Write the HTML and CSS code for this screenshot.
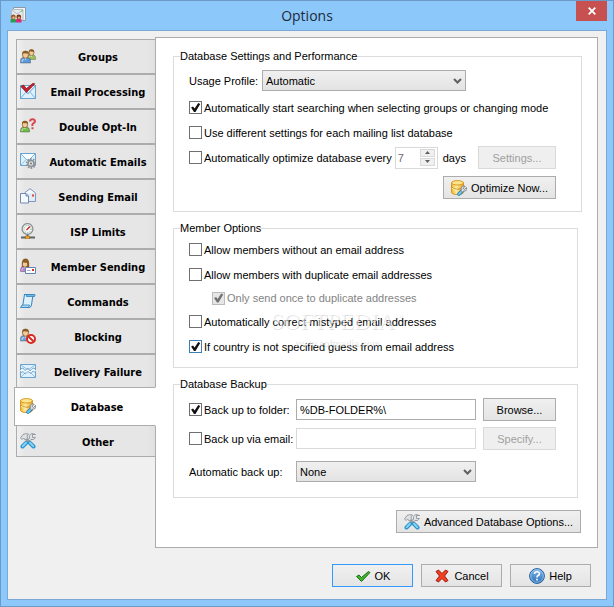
FILE: index.html
```html
<!doctype html>
<html lang="en">
  <head>
    <meta charset="utf-8">
    <title>Options</title>
    <link rel="stylesheet" href="styles.css">
  </head>
  <body>

    <svg class="defs" width="0" height="0" aria-hidden="true">
      <linearGradient id="gold" x1="0" x2="1" y1="0" y2="0">
        <stop offset="0" stop-color="#f2b632"/>
        <stop offset="0.4" stop-color="#ffeb9c"/>
        <stop offset="1" stop-color="#eaa31c"/>
      </linearGradient>
      <linearGradient id="blue" x1="0" x2="0" y1="0" y2="1">
        <stop offset="0" stop-color="#7fb8ea"/>
        <stop offset="1" stop-color="#2b6fb8"/>
      </linearGradient>
      <symbol id="person" viewBox="0 0 10 12">
        <path d="M.5 11.5V9.5Q.5 7 3 6.6H7Q9.500 7 9.500 9.500V11.500Z" fill="currentColor" stroke="#0004"/>
        <path d="M2 10.500V9.500Q2 8.300 3.500 8" fill="none" stroke="#fff9"/>
        <path d="M4 6.500H6L5 9Z" fill="#fff"/>
        <ellipse cx="5" cy="4" rx="2.700" ry="3.200" fill="#f3cb9b" stroke="#7a5220" stroke-width=".7"/>
        <path d="M2 4Q1.500 .3 5 .3T8 4L7 2.800Q4.500 3 3.500 2.300Z" fill="#8b5c22"/>
      </symbol>
      <symbol id="database" viewBox="0 0 16 16">
        <path d="M.5 2.500V12Q.5 14.500 6.500 14.500T12.500 12V2.500Z" fill="url(#gold)" stroke="#d59a26"/>
        <ellipse cx="6.500" cy="2.800" rx="6" ry="2.200" fill="#ffe58a" stroke="#d59a26"/>
        <path d="M.5 7Q2 9.300 6.500 9.300T12.500 7" fill="none" stroke="#c98d1e"/>
        <path d="M1 8.200Q3 10.300 6.500 10.300" fill="none" stroke="#fff3b8"/>
        <path d="M10.500 11.500L8 14" stroke="#1f7fc0" stroke-width="3.600" stroke-linecap="round"/>
        <path d="M10.500 11.500L8 14" stroke="#6cc8f0" stroke-width="2" stroke-linecap="round"/>
        <path d="M15.500 7.500L13.500 9.500L12.300 8.300L14.200 6.200Q11.500 5.300 10.300 7.300Q9.800 8.500 10.300 9.500L9.800 10.500L11.500 12L12.500 11.300Q15 11.500 15.700 9.500Z" fill="#d5dbe0" stroke="#6c757d" stroke-width=".8"/>
      </symbol>
      <symbol id="tools" viewBox="0 0 16 16">
        <path d="M5 5L11 11M11 5L5 11" stroke="#989da2" stroke-width="2.600"/>
        <path d="M10 10L13.500 13.500" stroke="#2b8fc9" stroke-width="4" stroke-linecap="round"/>
        <path d="M10 9.800L13.300 13.300" stroke="#7fd4f6" stroke-width="2" stroke-linecap="round"/>
        <path d="M6 10L2.500 13.500" stroke="#2b8fc9" stroke-width="4" stroke-linecap="round"/>
        <path d="M6 9.800L2.700 13.300" stroke="#7fd4f6" stroke-width="2" stroke-linecap="round"/>
        <path d="M.5 5L3 1.500Q5.500 0 8.500 1L7 3L7.500 5L5.500 7L3.500 5L2 6.500Z" fill="#dfe2e4" stroke="#858b90" stroke-width=".8"/>
        <path d="M15.500 1.500H12.500V4.500H15.500Q14 7.500 11 6.500L9.500 8L8.200 6.500L9.500 5Q8.700 1.500 12 .5Z" fill="#dfe2e4" stroke="#858b90" stroke-width=".8"/>
      </symbol>
      <symbol id="envelope" viewBox="0 0 16 13" preserveAspectRatio="none">
        <path d="M.5.5H15.500V12.500H.5Z" fill="#dff1fc" stroke="#6ba3cf"/>
        <path d="M1 12L6 6.500M15 12L10 6.500" fill="none" stroke="#8fc0e2"/>
        <path d="M1 1L8 8L15 1" fill="#f7fcff" stroke="#7db4dc"/>
      </symbol>
      <symbol id="chevron" viewBox="0 0 9 6">
        <path d="M1 1L4.500 4.500L8 1" fill="none" stroke="#606060" stroke-width="2"/>
      </symbol>
    </svg>

    <div class="window">
      <header class="titlebar">
        <svg class="app-icon" viewBox="0 0 16 16">
          <path d="M3.500.5H15.500V13.500H3.500Z" fill="#f2f5f7" stroke="#8d99a5"/>
          <path d="M1.500 2.500H13V13H1.500Z" fill="#e4eaee" stroke="#b2bec8"/>
          <path d="M2 3L7 7L13 3" fill="none" stroke="#b2bec8"/>
          <path d="M11 3H13V5H11Z" fill="#93cf85"/>
          <path d="M.5 15.500V12.500Q3 10.500 6 12.500V15.500Z" fill="#2f9c56"/>
          <circle cx="3.300" cy="10" r="2.400" fill="#9c5a25"/>
          <path d="M6 15.500V12.500Q9 10.500 11.500 12.500V15.500Z" fill="#d92a79"/>
          <circle cx="8.800" cy="10" r="2.400" fill="#7d3514"/>
          <circle cx="3.500" cy="10.700" r="1.200" fill="#f0b880"/>
          <circle cx="8.900" cy="10.700" r="1.200" fill="#e8a674"/>
        </svg>
        <h1 class="title">Options</h1>
        <button class="close" aria-label="Close">
          <svg viewBox="0 0 8 8"><path d="M.7.7L7.300 7.300M7.300.7L.7 7.300" stroke="#fff" stroke-width="1.800"/></svg>
        </button>
      </header>

      <div class="client">
        <div class="pages">
          <nav class="tabs">
            <button class="tab">
              <svg viewBox="0 0 16 16"><use href="#person" x="7" y="0" width="9" height="13" color="#9cc05c"/><use href="#person" x="0" y="2" width="11" height="14" color="#5b9be0"/></svg>
              <span>Groups</span>
            </button>
            <button class="tab">
              <svg viewBox="0 0 16 16"><use href="#envelope" x="0" y="2" width="16" height="14"/><path d="M1 3.500L3.500 2L6.500 5.500L13 .3L14.800 .8L6.500 9.500Z" fill="#c8202c" stroke="#7d1018" stroke-width=".7"/></svg>
              <span>Email Processing</span>
            </button>
            <button class="tab">
              <svg viewBox="0 0 16 16"><use href="#person" x="0" y="2" width="10" height="13" color="#72bd4c"/><path d="M10 3.500Q10.200 1.200 12.500 1.200T15 3.200Q15 4.500 13.500 5.200T12.500 8M12.500 9.300V11.300" fill="none" stroke="#d9474c" stroke-width="2"/></svg>
              <span>Double Opt-In</span>
            </button>
            <button class="tab">
              <svg viewBox="0 0 16 16"><use href="#envelope" x="0" y="0" width="16" height="13"/><circle cx="11" cy="10.500" r="4.500" fill="none" stroke="#8d9296" stroke-width="1.800" stroke-dasharray="1.600 1.230"/><circle cx="11" cy="10.500" r="3" fill="#dfe2e4" stroke="#8d9296" stroke-width="1.600"/><circle cx="11" cy="10.500" r="1" fill="#70757a"/></svg>
              <span>Automatic Emails</span>
            </button>
            <button class="tab">
              <svg viewBox="0 0 16 16"><path d="M4.500 5L10 .7L15.500 5V13.500H4.500Z" fill="#e2ecf7" stroke="#8095b8"/><path d="M5.500 5L10 1.800L14.500 5Z" fill="#f6f9fd"/><path d="M12 6.500H14V8.500H12Z" fill="#e5412a"/><path d="M.5 5.500H6L8.500 8V15H.5Z" fill="#f6f9fd" stroke="#7288b0"/><path d="M6 5.500V8H8.500" fill="#b9c9e4" stroke="#7288b0"/></svg>
              <span>Sending Email</span>
            </button>
            <button class="tab">
              <svg viewBox="0 0 16 16"><circle cx="7.500" cy="6" r="5.400" fill="#f8fafb" stroke="#8b9196" stroke-width="1.300"/><circle cx="7.500" cy="6" r="3.600" fill="none" stroke="#519b60" stroke-dasharray="1 1.400"/><path d="M6.500 7L10 3.500" stroke="#d12626" stroke-width="1.400"/><path d="M7.500 11.500V14M1 14.500H15" stroke="#5f6468" stroke-width="1.800"/><path d="M5.500 13H9.500V16H5.500Z" fill="#f0a52d" stroke="#98651d" stroke-width=".6"/></svg>
              <span>ISP Limits</span>
            </button>
            <button class="tab">
              <svg viewBox="0 0 16 16"><path d="M1.800 9Q1 .5 5.500.5T9.200 9Z" fill="#8b5c22"/><use href="#person" x="0" y="1" width="10" height="14" color="#bd7cd2"/><path d="M5.500 9.500H15.500V15.500H5.500Z" fill="#fff" stroke="#5e86b6"/><path d="M12 11H14V13H12Z" fill="#e62b20"/><path d="M7 12.500H10.500" stroke="#9aaec8"/></svg>
              <span>Member Sending</span>
            </button>
            <button class="tab">
              <svg viewBox="0 0 16 16"><path d="M4.500 1.500H14.500Q12.500 2 12.500 5L11.500 12Q11 14.500 9 14.500H.7Q2.500 13.500 3 11Z" fill="#dcf1fc" stroke="#3583bb"/><path d="M4.500 1.500Q7 .8 6.500 3.500H14.500Q15.800 1.500 14.500 1.500Z" fill="#6fb9e4" stroke="#3583bb" stroke-width=".8"/><path d="M.7 14.500Q1 12 3 12H9.500Q8.200 14.500 9.500 14.500Z" fill="#a7d6f1" stroke="#3583bb" stroke-width=".8"/></svg>
              <span>Commands</span>
            </button>
            <button class="tab">
              <svg viewBox="0 0 16 16"><use href="#person" x="0" y="0" width="11" height="14" color="#6ba3dc"/><circle cx="11" cy="11" r="4" fill="#fff" stroke="#d92b22" stroke-width="2"/><path d="M8.200 8.200L13.800 13.800" stroke="#d92b22" stroke-width="2"/></svg>
              <span>Blocking</span>
            </button>
            <button class="tab">
              <svg viewBox="0 0 16 16"><path d="M.5 1.500H15.500V14.500H.5Z" fill="#dff1fc" stroke="#6ba3cf"/><path d="M1 2L8 7L15 2M1 14L6 9M15 14L10 9" fill="none" stroke="#8fc0e2"/><path d="M0 8L3 7L5 9.300L8 6.800L10.500 9.300L13 6.500L16 8" fill="none" stroke="#fff"/><path d="M0 6L3 5L5 7.500L8 5L10 8L13 5L16 6M0 10L3 8.500L5 11L8 8.500L11 10.500L13 8L16 10" fill="none" stroke="#6b9cc4" stroke-width=".8"/></svg>
              <span>Delivery Failure</span>
            </button>
            <button class="tab tab-selected">
              <svg><use href="#database"/></svg>
              <span>Database</span>
            </button>
            <button class="tab tab-last">
              <svg><use href="#tools"/></svg>
              <span>Other</span>
            </button>
          </nav>

          <main class="panel">
            <fieldset class="group group-settings">
              <legend>Database Settings and Performance</legend>
              <div class="profile-row">
                <label for="profile">Usage Profile:</label>
                <div class="combo">
                  <select id="profile"><option>Automatic</option></select>
                  <svg><use href="#chevron"/></svg>
                </div>
              </div>
              <label class="check"><input type="checkbox" checked>Automatically start searching when selecting groups or changing mode</label>
              <label class="check"><input type="checkbox">Use different settings for each mailing list database</label>
              <div class="optimize-row">
                <label class="check"><input type="checkbox">Automatically optimize database every</label>
                <div class="spinner">
                  <input id="days" type="number" value="7" disabled>
                  <div class="spinner-buttons">
                    <button disabled aria-label="More"><svg viewBox="0 0 5 3"><path d="M0 3L2.500 0L5 3Z"/></svg></button>
                    <button disabled aria-label="Less"><svg viewBox="0 0 5 3"><path d="M0 0L2.500 3L5 0Z"/></svg></button>
                  </div>
                </div>
                <label class="days" for="days">days</label>
                <button class="button button-settings" disabled>Settings...</button>
              </div>
              <div class="actions">
                <button class="button button-optimize"><svg><use href="#database"/></svg>Optimize Now...</button>
              </div>
            </fieldset>

            <fieldset class="group group-members">
              <legend>Member Options</legend>
              <label class="check"><input type="checkbox">Allow members without an email address</label>
              <label class="check"><input type="checkbox">Allow members with duplicate email addresses</label>
              <label class="check check-sub"><input type="checkbox" checked disabled>Only send once to duplicate addresses</label>
              <label class="check"><input type="checkbox">Automatically correct mistyped email addresses</label>
              <label class="check"><input class="focused" type="checkbox" checked>If country is not specified guess from email address</label>
              <div class="watermark">
                <div class="watermark-name">SOFTPEDIA<sup>™</sup></div>
                <div class="watermark-url">www.softpedia.com</div>
              </div>
            </fieldset>

            <fieldset class="group group-backup">
              <legend>Database Backup</legend>
              <div class="backup-grid">
                <label class="check"><input type="checkbox" checked>Back up to folder:</label>
                <input class="text" type="text" value="%DB-FOLDER%\" aria-label="Back up folder">
                <button class="button">Browse...</button>
                <label class="check"><input type="checkbox">Back up via email:</label>
                <input class="text" type="text" disabled aria-label="Back up email">
                <button class="button" disabled>Specify...</button>
              </div>
              <div class="backup-grid backup-auto">
                <label for="auto">Automatic back up:</label>
                <div class="combo">
                  <select id="auto"><option>None</option></select>
                  <svg><use href="#chevron"/></svg>
                </div>
              </div>
            </fieldset>

            <div class="actions">
              <button class="button button-advanced"><svg><use href="#tools"/></svg>Advanced Database Options...</button>
            </div>
          </main>
        </div>

        <footer class="footer">
          <button class="button button-default">
            <svg viewBox="0 0 16 16"><path d="M1.500 8.500L4 7L6.500 9.500L13.500 3.500L15 4.500L6.500 13.500Z" fill="#3fb52c" stroke="#1d6e16"/></svg>OK
          </button>
          <button class="button">
            <svg viewBox="0 0 16 16"><path d="M2 3.500L4.500 2L8 5.500L11.500 2L14 3.500L10.500 8L14 12.500L11.500 14L8 10.500L4.500 14L2 12.500L5.500 8Z" fill="#f23f20" stroke="#9d1c10"/></svg>Cancel
          </button>
          <button class="button">
            <svg viewBox="0 0 16 16"><circle cx="8" cy="8" r="7.400" fill="url(#blue)" stroke="#235f9f"/><circle cx="8" cy="8" r="6.300" fill="none" stroke="#a9d0f2" stroke-width=".7"/><path d="M5.500 6Q5.700 3.800 8 3.800T10.500 5.800Q10.500 7 9.200 7.600T8 9.500M8 10.700V12.500" fill="none" stroke="#fff" stroke-width="1.600"/></svg>Help
          </button>
        </footer>
      </div>
    </div>

  </body>
</html>
```

FILE: styles.css
```css
* {
  box-sizing: border-box;
}

body {
  margin: 0;
  font: 11px/14px Tahoma, "Liberation Sans", sans-serif;
  color: #000;
}

button, input, select {
  font: inherit;
  color: inherit;
  margin: 0;
}

svg {
  display: block;
  flex: none;
  width: 16px;
  height: 16px;
}

.defs {
  position: absolute;
  width: 0;
  height: 0;
}

.window {
  display: flex;
  flex-direction: column;
  min-height: 100vh;
  padding: 0 6px 6px;
  background: #8dc8fa;
  border: 1px solid #6b9ac8;
}

.titlebar {
  display: grid;
  grid-template-columns: 31px 1fr 31px;
  height: 29px;
}

.app-icon {
  margin: 6px 0 0 3px;
}

.title {
  margin: 0;
  font: 14px/29px "Open Sans", sans-serif;
  text-align: center;
  color: #1c2a38;
}

.close {
  display: flex;
  align-items: center;
  justify-content: center;
  height: 20px;
  padding: 0;
  border: 0;
  background: #c75050;
}

.close svg {
  width: 8px;
  height: 8px;
}

.client {
  flex: 1;
  padding: 6px 8px 11px 6px;
  background: #f0f0f0;
  border: 1px solid #7aa9d8;
}

.pages {
  display: flex;
}

/* tabs */

.tabs {
  flex: none;
  width: 142px;
  margin-right: -1px;
  padding-top: 2px;
}

.tab {
  display: flex;
  width: 140px;
  height: 35px;
  margin-left: 2px;
  padding: 8px 0 0 3px;
  font-family: "DejaVu Sans Condensed", "DejaVu Sans", sans-serif;
  font-weight: bold;
  background: linear-gradient(90deg, #f0f0f0, #e6e6e6 8px, #e6e6e6 130px, #e0e0e0);
  border: 1px solid #acacac;
}

.tab span {
  flex: 1;
  padding-left: 5px;
  line-height: 19px;
  text-align: center;
}

.tab-selected {
  position: relative;
  width: 142px;
  height: 39px;
  margin: -2px 0;
  padding: 10px 2px 0 5px;
  background: #fff;
  border-right-color: #fff;
}

.tab-last {
  height: 33px;
}

/* database page */

.panel {
  flex: 1;
  min-width: 0;
  min-height: 511px;
  padding: 11px 16px 14px 17px;
  background: #fff;
  border: 1px solid #acacac;
}

.group {
  min-width: 0;
  margin: 0 3px 9px 0;
  padding: 0 21px 0 15px;
  border: 1px solid #dcdcdc;
}

.group legend {
  margin-left: -9px;
  padding: 0;
}

.group-settings {
  margin-right: -1px;
  padding: 7px 25px 12px 15px;
}

.group-members {
  position: relative;
  padding-top: 2px;
  padding-bottom: 8px;
}

.group-backup {
  padding-top: 7px;
  padding-bottom: 15px;
  margin-bottom: 12px;
}

.check {
  display: flex;
  align-items: center;
  height: 25px;
  white-space: nowrap;
}

.check-sub {
  height: 22px;
  margin-left: 23px;
  color: #838383;
}

.check input {
  appearance: none;
  flex: none;
  width: 13px;
  height: 13px;
  margin-right: 2px;
  background: #fff;
  border: 1px solid #707070;
}

.check input:checked::before {
  content: "";
  display: block;
  width: 11px;
  height: 11px;
  background: #111;
  clip-path: polygon(10% 50%, 28% 40%, 42% 60%, 75% 8%, 93% 18%, 50% 90%, 36% 90%);
}

.check input:disabled {
  background: #e6e6e6;
  border-color: #bcbcbc;
}

.check input:disabled::before {
  background: #707070;
}

.check .focused {
  border-color: #3c7fb1;
}

.profile-row {
  display: grid;
  grid-template-columns: 73px minmax(0, 204px);
  align-items: center;
  margin-bottom: 4px;
}

.combo {
  display: grid;
  align-items: center;
}

.combo select,
.combo svg {
  grid-area: 1 / 1;
}

.combo select {
  appearance: none;
  width: 100%;
  height: 21px;
  padding: 0 20px 0 3px;
  background: linear-gradient(#f0f0f0, #e3e3e3);
  border: 1px solid #acacac;
  border-radius: 0;
}

.combo svg {
  justify-self: end;
  width: 9px;
  height: 6px;
  margin-right: 4px;
  pointer-events: none;
}

.optimize-row {
  display: flex;
  align-items: center;
  height: 25px;
}

.optimize-row .check {
  min-width: 201px;
}

.spinner {
  display: flex;
  width: 43px;
  height: 22px;
  margin-left: 3px;
  border: 1px solid #d9d9d9;
}

.spinner input {
  appearance: textfield;
  flex: 1;
  min-width: 0;
  padding: 0 0 0 2px;
  color: #6d6d6d;
  background: #fff;
  border: 0;
}

.spinner-buttons {
  display: grid;
  gap: 1px;
  width: 17px;
  padding: 1px 2px 2px 0;
}

.spinner-buttons button {
  display: flex;
  align-items: center;
  justify-content: center;
  padding: 0;
  background: #f0f0f0;
  border: 1px solid #d9d9d9;
}

.spinner-buttons svg {
  width: 5px;
  height: 3px;
  fill: #606060;
}

.days {
  margin-left: 5px;
}

.button {
  display: flex;
  align-items: center;
  justify-content: center;
  gap: 4px;
  height: 23px;
  padding: 0;
  white-space: nowrap;
  background: linear-gradient(#f0f0f0, #e4e4e4);
  border: 1px solid #acacac;
}

.button:disabled {
  color: #a0a0a0;
  background: #efefef;
  border-color: #d9d9d9;
}

.actions {
  display: flex;
  justify-content: flex-end;
}

.group-settings .actions {
  margin-top: 6px;
}

.button-settings {
  width: 78px;
  margin-left: auto;
}

.button-optimize {
  width: 113px;
}

.button-advanced {
  width: 185px;
}

.backup-grid {
  display: grid;
  grid-template-columns: 107px minmax(0, 1fr) 73px;
  gap: 6px 0;
  align-items: center;
}

.backup-grid .check {
  height: 23px;
}

.backup-auto {
  margin-top: 11px;
}

.text {
  width: 100%;
  height: 21px;
  padding: 0 3px;
  background: #fff;
  border: 1px solid #acacac;
}

.text:disabled {
  border-color: #d9d9d9;
}

.backup-grid .text,
.backup-grid .combo {
  width: calc(100% - 7px);
}

/* faint stamp over the member options */

.watermark {
  position: absolute;
  top: 73px;
  left: 97px;
  font-family: "Liberation Serif", serif;
  text-align: center;
  color: #fff9;
  text-shadow: 1px 1px 0 #00000020;
  pointer-events: none;
}

.watermark-name {
  font-size: 23px;
  line-height: 28px;
}

.watermark-name sup {
  font-size: 8px;
  line-height: 8px;
  vertical-align: 10px;
}

.watermark-url {
  font: bold 9px/14px "Liberation Sans", sans-serif;
}

/* bottom buttons */

.footer {
  display: flex;
  justify-content: flex-end;
  gap: 8px;
  padding: 16px 7px 0 0;
}

.footer .button {
  width: 81px;
}

.footer .button-default {
  border-color: #3399ff;
}
```
